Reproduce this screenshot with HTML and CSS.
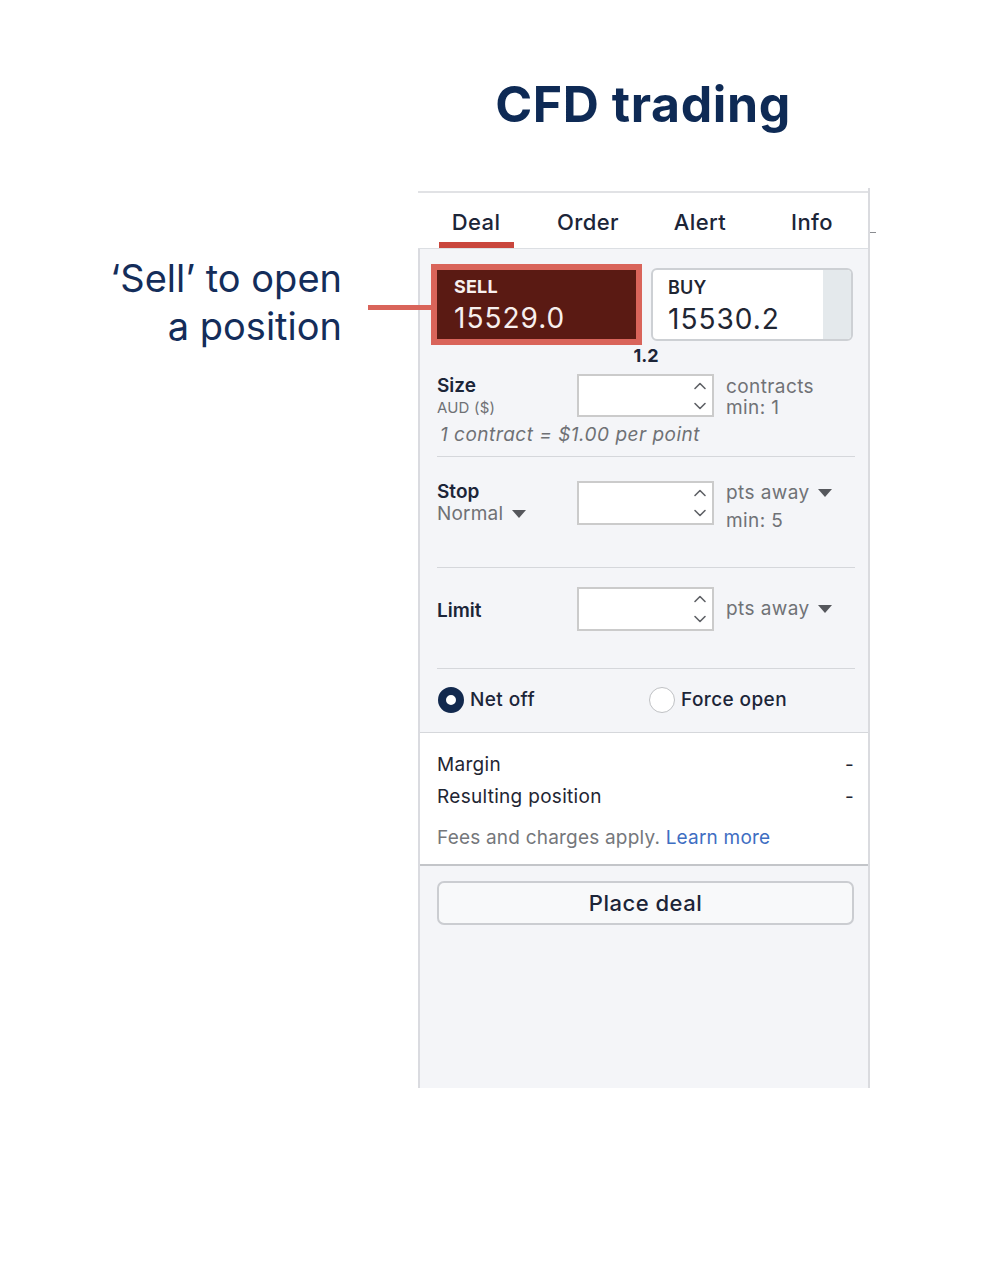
FILE: index.html
```html
<!DOCTYPE html>
<html lang="en">
<head>
<meta charset="utf-8">
<title>CFD trading</title>
<link rel="stylesheet" href="styles.css">
</head>
<body>
<div class="page">
  <h1 class="title">CFD trading</h1>
  <div class="stage">
    <div class="note"><p>‘Sell’ to open<br>a position</p></div>
    <span class="connector"></span>
    <div class="panel">
      <nav class="tabs">
        <div class="tab active"><span class="tab-label">Deal</span><span class="tab-bar"></span></div>
        <div class="tab"><span class="tab-label">Order</span><span class="tab-bar"></span></div>
        <div class="tab"><span class="tab-label">Alert</span><span class="tab-bar"></span></div>
        <div class="tab"><span class="tab-label">Info</span><span class="tab-bar"></span></div>
      </nav>
      <div class="body">
        <div class="ticket">
          <div class="prices">
            <div class="price sell">
              <span class="p-label">SELL</span>
              <span class="p-value">15529.0</span>
            </div>
            <div class="price buy">
              <div class="buy-main">
                <span class="p-label">BUY</span>
                <span class="p-value">15530.2</span>
              </div>
              <span class="buy-edge"></span>
            </div>
          </div>
          <div class="spread">1.2</div>

          <div class="field size">
            <div class="f-label"><span class="f-name">Size</span><span class="f-sub small">AUD ($)</span></div>
            <div class="spin">
              <svg class="chev" width="14" height="30" viewBox="0 0 14 30"><path d="M2 7.5 L7 2.5 L12 7.5" /><path d="M2 22.5 L7 27.5 L12 22.5" /></svg>
            </div>
            <div class="hint"><span>contracts</span><span>min: 1</span></div>
          </div>
          <p class="per">1 contract = $1.00 per point</p>
          <div class="rule"></div>

          <div class="field stop">
            <div class="f-label"><span class="f-name">Stop</span><span class="f-sub">Normal <svg class="tri" width="14" height="8" viewBox="0 0 14 8"><polygon points="0,0 14,0 7,8"/></svg></span></div>
            <div class="spin">
              <svg class="chev" width="14" height="30" viewBox="0 0 14 30"><path d="M2 7.5 L7 2.5 L12 7.5" /><path d="M2 22.5 L7 27.5 L12 22.5" /></svg>
            </div>
            <div class="hint"><span>pts away <svg class="tri" width="14" height="8" viewBox="0 0 14 8"><polygon points="0,0 14,0 7,8"/></svg></span><span class="min">min: 5</span></div>
          </div>
          <div class="rule flush"></div>

          <div class="field limit">
            <div class="f-label"><span class="f-name">Limit</span></div>
            <div class="spin">
              <svg class="chev" width="14" height="30" viewBox="0 0 14 30"><path d="M2 7.5 L7 2.5 L12 7.5" /><path d="M2 22.5 L7 27.5 L12 22.5" /></svg>
            </div>
            <div class="hint"><span>pts away <svg class="tri" width="14" height="8" viewBox="0 0 14 8"><polygon points="0,0 14,0 7,8"/></svg></span></div>
          </div>
          <div class="rule flush"></div>

          <div class="radios">
            <label class="radio"><span class="dot on"></span>Net off</label>
            <label class="radio"><span class="dot"></span>Force open</label>
          </div>
        </div>

        <div class="summary">
          <div class="s-row"><span>Margin</span><span>-</span></div>
          <div class="s-row"><span>Resulting position</span><span>-</span></div>
          <p class="fees">Fees and charges apply. <a class="learn" href="#">Learn more</a></p>
        </div>

        <div class="actions">
          <button class="place" type="button">Place deal</button>
        </div>
      </div>
    </div>
  </div>
</div>
</body>
</html>
```

FILE: styles.css
```css
* { box-sizing: border-box; }

body {
  margin: 0;
  background: #ffffff;
  font-family: Inter, "Noto Sans", "Liberation Sans", sans-serif;
  color: #1c2538;
}

.title {
  margin: 0 0 0 418px;
  padding-top: 74px;
  width: 450px;
  text-align: center;
  font-size: 50px;
  line-height: 60px;
  font-weight: 700;
  color: #0e2a55;
  letter-spacing: 0.6px;
}

.stage {
  position: relative;
  display: flex;
  margin-top: 54px;
}

.note {
  width: 342px;
  margin-top: 66px;
  text-align: right;
  font-size: 38px;
  line-height: 48px;
  color: #142d5a;
}
.note p { margin: 0; }

.connector {
  position: absolute;
  left: 368px;
  top: 117px;
  width: 66px;
  height: 5px;
  background: #d9645a;
}

.panel {
  margin-left: 76px;
  width: 452px;
  padding-top: 3px;
  border-right: 2px solid #dadbdf;
}

/* Tabs */
.tabs {
  position: relative;
  display: grid;
  grid-template-columns: repeat(4, 1fr);
  padding-left: 2px;
  background: #ffffff;
  border-top: 2px solid #e1e2e5;
  border-bottom: 1px solid #dcdfe3;
}
.tabs::after {
  content: "";
  position: absolute;
  left: calc(100% + 2px);
  top: 39px;
  width: 6px;
  height: 1px;
  background: #8a8c90;
}
.tab {
  display: flex;
  flex-direction: column;
  align-items: center;
  padding-top: 16px;
}
.tab-label {
  font-size: 22px;
  line-height: 26px;
  font-weight: 500;
  letter-spacing: 0.4px;
  color: #1c2538;
}
.tab-bar {
  width: 75px;
  height: 6px;
  margin-top: 7px;
}
.tab.active .tab-bar { background: #c9463d; }

/* Body */
.body {
  border-left: 2px solid #dadbe0;
  background: #f4f5f8;
}
.ticket {
  padding: 15px 13px 0 17px;
}

.prices {
  display: flex;
  align-items: center;
  gap: 9px;
  margin-left: -6px;
}
.price {
  display: flex;
}
.sell {
  flex-direction: column;
  width: 211px;
  height: 81px;
  border: 6px solid #d9645a;
  background: #5a1a13;
  color: #f7efee;
  padding: 6px 0 0 17px;
}
.p-label {
  font-size: 18px;
  line-height: 22px;
  font-weight: 700;
  letter-spacing: 0.2px;
}
.p-value {
  margin-top: 4px;
  font-size: 28px;
  line-height: 32px;
  font-weight: 400;
  letter-spacing: 1px;
}
.buy {
  width: 202px;
  height: 73px;
  border: 2px solid #cdd0d4;
  border-radius: 6px;
  background: #ffffff;
  overflow: hidden;
  color: #1f2633;
}
.buy-main {
  flex: 1;
  display: flex;
  flex-direction: column;
  padding: 7px 0 0 15px;
}
.buy .p-label { font-weight: 600; }
.buy-edge {
  width: 28px;
  background: #e4e9ec;
}

.spread {
  text-align: center;
  font-size: 18px;
  line-height: 22px;
  font-weight: 700;
  color: #1c2538;
}

/* Fields */
.field {
  display: grid;
  grid-template-columns: 140px 137px 1fr;
}
.f-label {
  display: flex;
  flex-direction: column;
}
.f-name {
  font-size: 19px;
  line-height: 22px;
  font-weight: 600;
  color: #1c2538;
}
.f-sub {
  display: flex;
  align-items: center;
  gap: 9px;
  font-size: 19px;
  line-height: 22px;
  letter-spacing: 0.2px;
  color: #6f7175;
}
.f-sub.small { font-size: 15px; }

.spin {
  position: relative;
  height: 44px;
  background: #ffffff;
  border: 2px solid #cbcbcb;
  display: flex;
  justify-content: flex-end;
  align-items: center;
  padding-right: 5px;
}
.chev path {
  fill: none;
  stroke: #5f6166;
  stroke-width: 1.6;
  stroke-linecap: round;
  stroke-linejoin: round;
}

.hint {
  display: flex;
  flex-direction: column;
  margin-left: 12px;
  font-size: 19px;
  letter-spacing: 0.4px;
  color: #707276;
}
.hint > span {
  display: flex;
  align-items: center;
  gap: 8px;
}
.tri polygon { fill: #55575c; }

.size {
  padding-top: 7px;
  align-items: start;
}
.size .f-label { padding-top: 1px; }
.size .spin { height: 43px; }
.size .hint { line-height: 21px; padding-top: 2px; }

.per {
  margin: 4px 0 0 3px;
  font-style: italic;
  font-size: 19px;
  line-height: 24px;
  letter-spacing: 0.5px;
  color: #6f7175;
}

.rule {
  height: 1px;
  background: #d5d7db;
  margin-top: 9px;
}
.rule.flush { margin-top: 0; }

.stop {
  padding: 24px 0 34px;
  align-items: start;
}
.stop .hint { line-height: 24px; }
.stop .hint .min { margin-top: 4px; }

.limit {
  padding: 19px 0 37px;
  align-items: center;
}
.limit .f-label { padding-top: 4px; }
.limit .hint { line-height: 24px; }

.radios {
  display: grid;
  grid-template-columns: 211px auto;
  padding: 18px 0 19px 1px;
}
.radio {
  display: flex;
  align-items: center;
  gap: 6px;
  font-size: 19px;
  line-height: 26px;
  font-weight: 500;
  letter-spacing: 0.4px;
  color: #1c2538;
}
.dot {
  width: 26px;
  height: 26px;
  border-radius: 50%;
  background: #ffffff;
  border: 1.5px solid #bfc1c4;
}
.dot.on {
  border: 8px solid #12294e;
}

/* Summary */
.summary {
  background: #ffffff;
  border-top: 1px solid #d5d7db;
  border-bottom: 2px solid #c3c5c9;
  padding: 16px 14px 12px 17px;
}
.s-row {
  display: flex;
  justify-content: space-between;
  font-size: 19px;
  line-height: 32px;
  letter-spacing: 0.3px;
  color: #1f2633;
}
.fees {
  margin: 11px 0 0;
  font-size: 19px;
  line-height: 28px;
  letter-spacing: 0.2px;
  color: #75777b;
}
.learn {
  color: #3e6ec2;
  text-decoration: none;
}

.actions {
  padding: 15px 14px 163px 17px;
}
.place {
  display: block;
  width: 100%;
  height: 44px;
  border: 2px solid #cbcdd1;
  border-radius: 7px;
  background: #f8f9fa;
  font-family: inherit;
  font-size: 22px;
  font-weight: 500;
  letter-spacing: 0.5px;
  color: #1c2538;
}
```
